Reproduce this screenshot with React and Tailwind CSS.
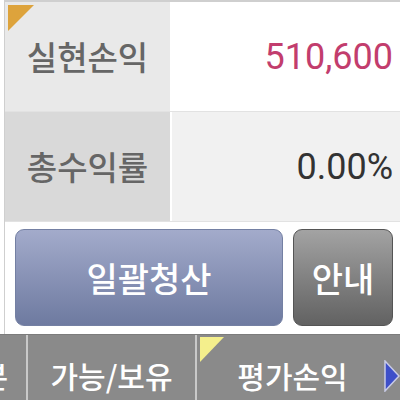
import React from 'react';

const kr = { fontFamily: '"Noto Sans CJK KR", "Noto Sans", sans-serif' };
const num = { fontFamily: 'Roboto, "Noto Sans", sans-serif' };

const Row = ({ label, value, labelBg, valueBg, valueColor, corner }) => (
  <div className="flex h-[110px] border-b border-[#e2e2e2]">
    <div className={`relative flex w-[165px] shrink-0 items-center justify-center ${labelBg}`}>
      {corner && (
        <div className="absolute left-[3px] top-[3px] h-[26px] w-[26px] bg-[#dda33c] [clip-path:polygon(0_0,100%_0,0_100%)]" />
      )}
      <span className="text-[33px] font-medium text-[#666666]" style={kr}>
        {label}
      </span>
    </div>
    <div className={`ml-[2px] flex flex-1 items-center justify-end pr-[7px] ${valueBg}`}>
      <span className={`text-[36px] ${valueColor}`} style={num}>
        {value}
      </span>
    </div>
  </div>
);

export default function App() {
  return (
    <div className="flex h-[400px] w-[400px] flex-col overflow-hidden bg-white">
      <div className="pl-[4px]">
        <div className="border-l border-t-2 border-[#cfcfcf]">
          <Row
            label="실현손익"
            value="510,600"
            labelBg="bg-[#e9e9e9]"
            valueBg="bg-white"
            valueColor="text-[#c23d6d]"
            corner
          />
          <Row
            label="총수익률"
            value="0.00%"
            labelBg="bg-[#d9d9d9]"
            valueBg="bg-[#f1f1f1]"
            valueColor="text-[#333333]"
          />
          <div className="flex h-[112px] gap-[10px] pb-[8px] pl-[10px] pr-[7px] pt-[7px]">
            <button
              className="flex flex-1 items-center justify-center rounded-[9px] border border-[#7480a3] bg-gradient-to-b from-[#a3abcb] to-[#6e7aa0] text-[34px] font-medium text-white"
              style={kr}
            >
              일괄청산
            </button>
            <button
              className="flex w-[100px] items-center justify-center rounded-[9px] border border-[#555555] bg-gradient-to-b from-[#a3a3a3] to-[#626262] text-[34px] font-medium text-white"
              style={kr}
            >
              안내
            </button>
          </div>
        </div>
      </div>
      <div className="flex flex-1 border-t border-[#7c7c7c] bg-[#8a8a8a] text-white" style={kr}>
        <div className="flex w-[26px] shrink-0 items-center justify-end overflow-hidden pr-[18px] pt-[16px]">
          <span className="whitespace-nowrap text-[30px] font-medium">구분</span>
        </div>
        <div className="w-[2px] bg-[#c9c9c9]" />
        <div className="flex w-[167px] shrink-0 items-center justify-center pt-[16px]">
          <span className="whitespace-nowrap text-[30px] font-medium">가능/보유</span>
        </div>
        <div className="w-[2px] bg-[#c9c9c9]" />
        <div className="relative flex flex-1 items-center justify-center pt-[16px]">
          <div className="absolute left-[3px] top-[2px] h-[25px] w-[24px] bg-[#f4ef8c] [clip-path:polygon(0_0,100%_0,0_100%)]" />
          <span className="whitespace-nowrap pr-[12px] text-[30px] font-medium">평가손익</span>
          <svg className="absolute right-0 top-[25px]" width="16" height="32" viewBox="0 0 16 32">
            <polygon points="1,1 15,16 1,31" fill="#3d4fc9" stroke="#c8cbe6" strokeWidth="1.5" />
          </svg>
        </div>
      </div>
    </div>
  );
}
